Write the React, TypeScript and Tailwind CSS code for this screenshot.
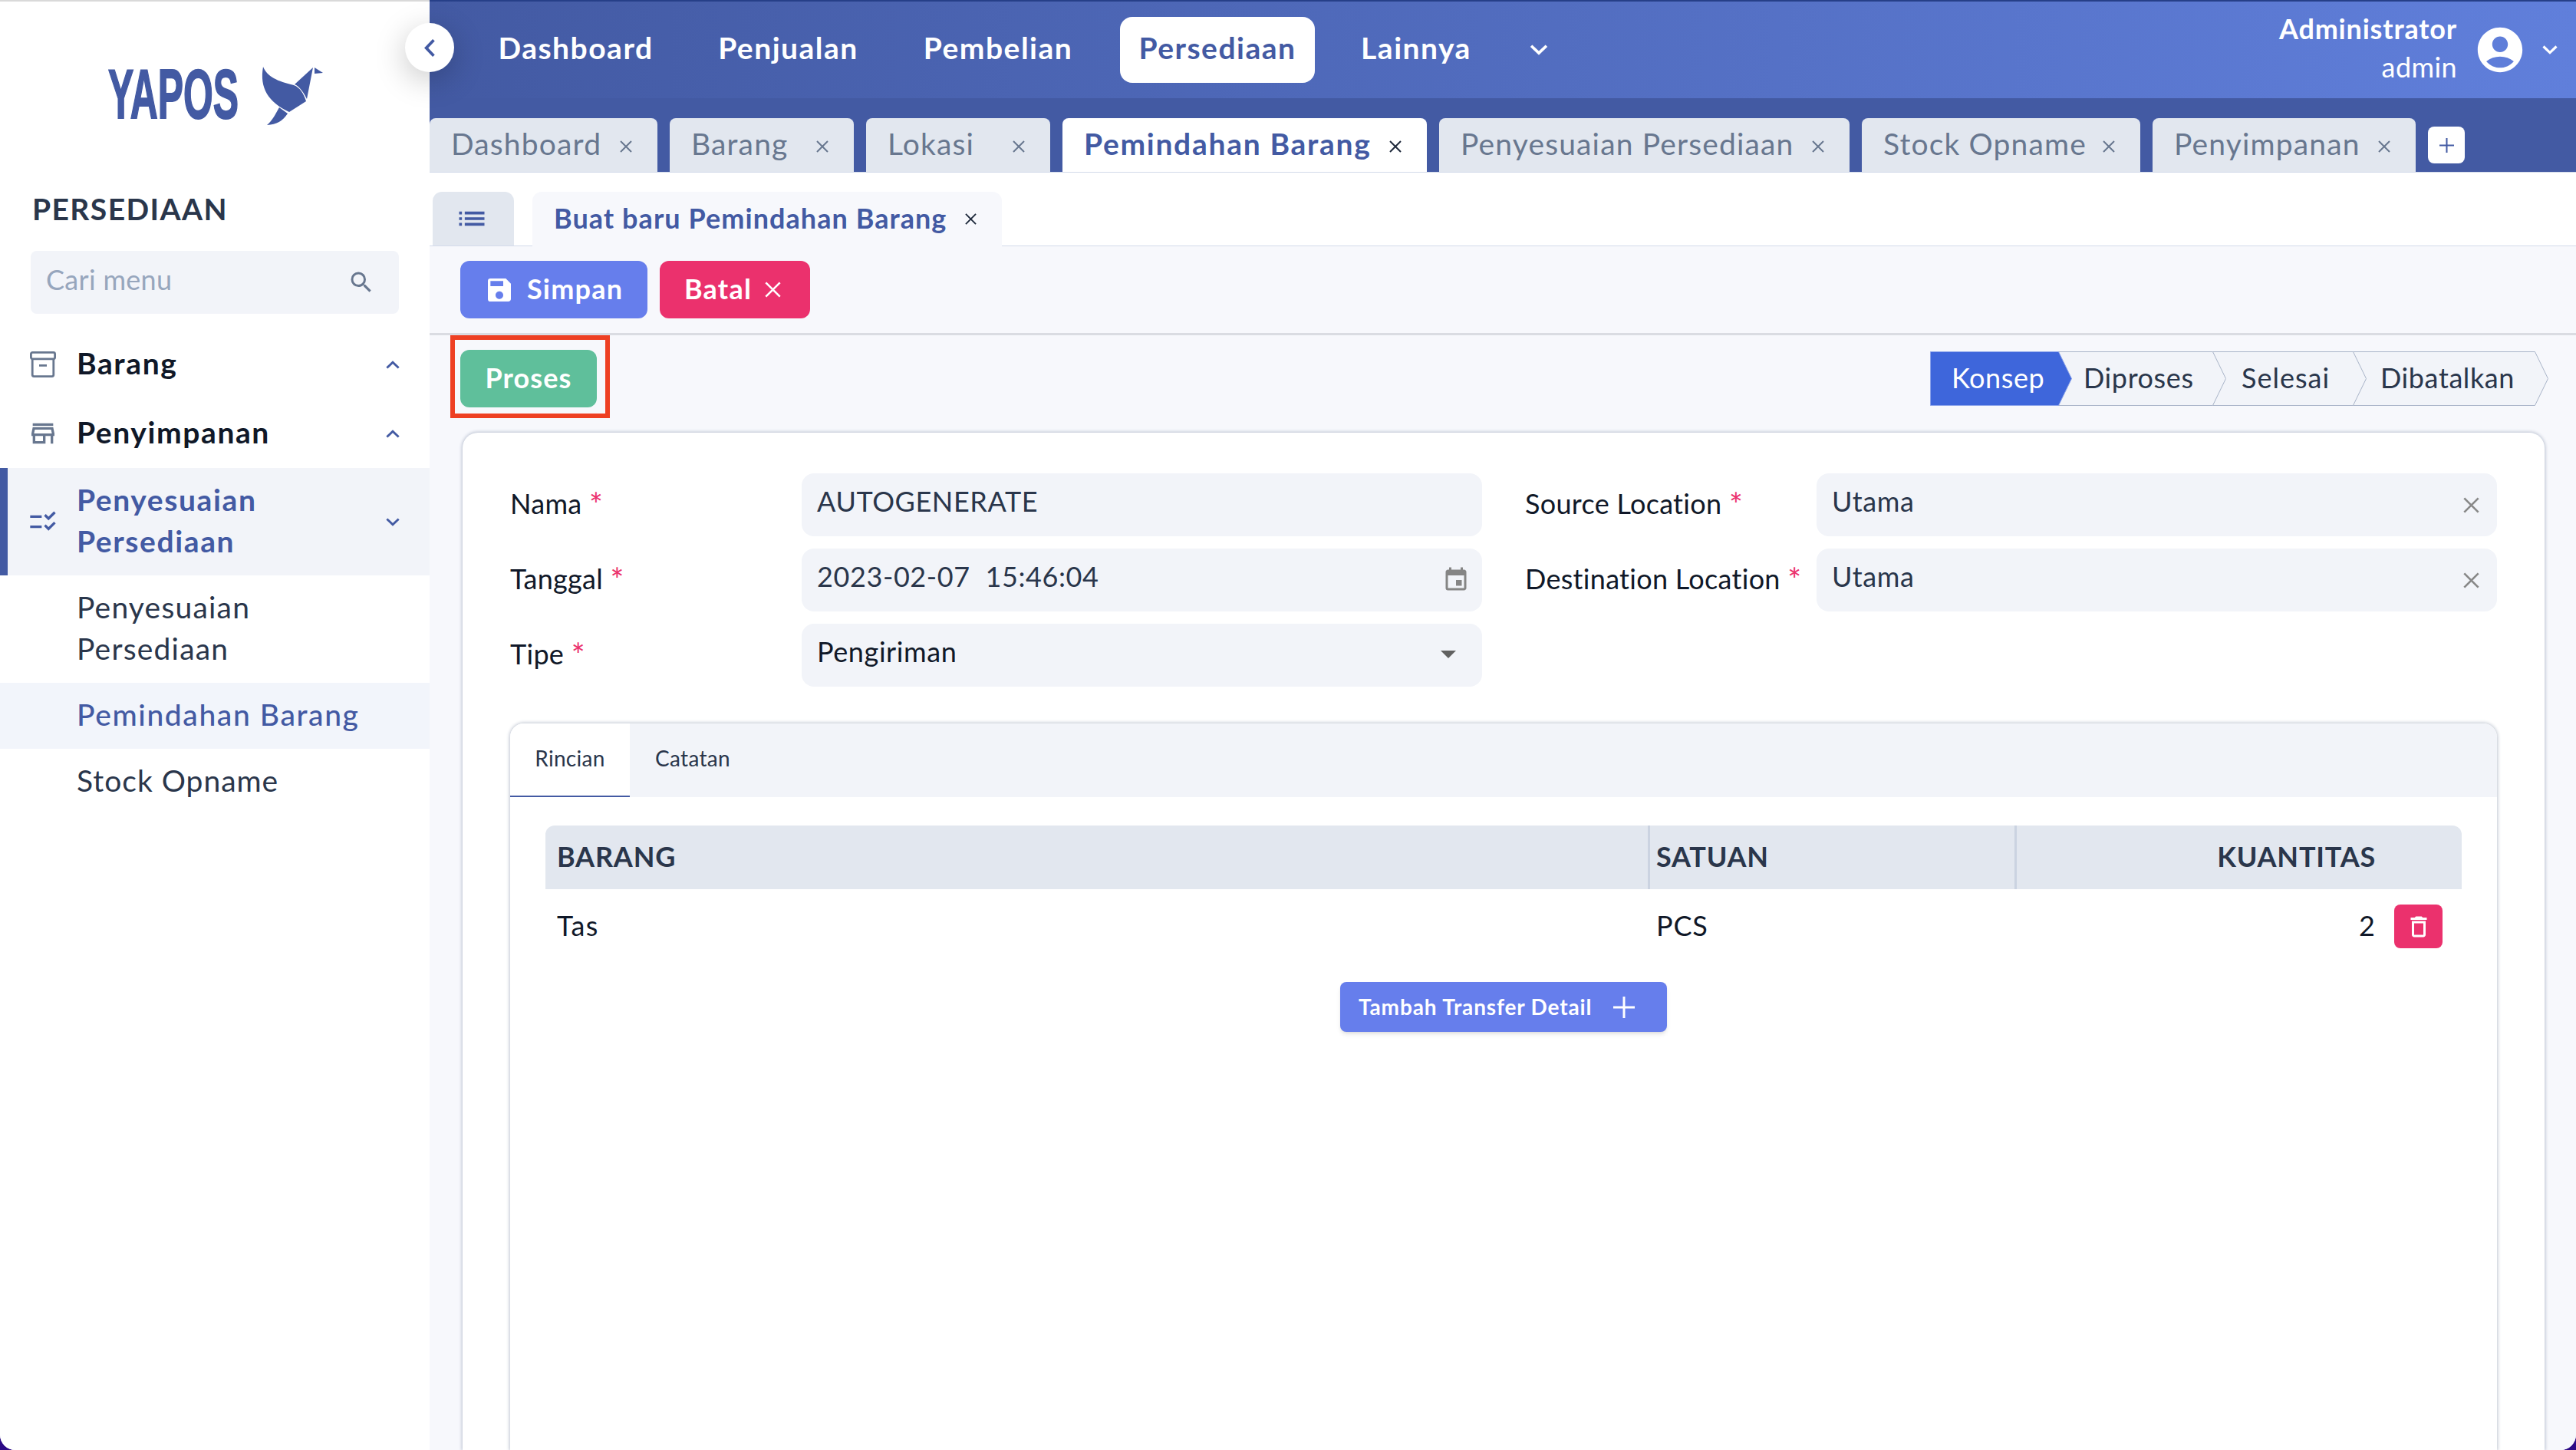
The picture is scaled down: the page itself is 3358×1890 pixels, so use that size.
import type { ReactNode } from 'react';
import clsx from 'clsx';
import {
  MdAccountCircle,
  MdArrowDropDown,
  MdChecklistRtl,
  MdDeleteOutline,
  MdEvent,
  MdList,
  MdOutlineStore,
  MdSave,
  MdSearch,
} from 'react-icons/md';

const Cross = ({ className }: { className?: string }) => (
  <svg viewBox="0 0 16 16" fill="none" stroke="currentColor" strokeWidth="2" className={className}>
    <path d="M1 1L15 15M15 1L1 15" />
  </svg>
);

const Plus = ({ className }: { className?: string }) => (
  <svg viewBox="0 0 16 16" fill="none" stroke="currentColor" strokeWidth="1.7" className={className}>
    <path d="M8 0V16M0 8H16" />
  </svg>
);

const Chevron = ({ className }: { className?: string }) => (
  <svg viewBox="0 0 20 12" fill="none" stroke="currentColor" strokeWidth="3.2" className={className}>
    <path d="M1.5 1.5L10 9.6L18.5 1.5" />
  </svg>
);

const ArchiveIcon = () => (
  <svg viewBox="0 0 34 34" fill="none" stroke="currentColor" strokeWidth="2.8" className="w-[34px] h-[34px]">
    <rect x="1.4" y="1.4" width="31.2" height="8.4" rx="2" />
    <path d="M3.2 9.8V30.6a2 2 0 0 0 2 2H28.8a2 2 0 0 0 2-2V9.8M12 18.4H22" />
  </svg>
);

const Logo = () => (
  <svg viewBox="-20 -30 320 160" fill="#435aa3" className="w-[320px] h-[160px] overflow-visible">
    <text
      x="3"
      y="84"
      fontFamily="'Liberation Sans Narrow', 'Liberation Sans', sans-serif"
      fontWeight="700"
      fontSize="90"
      textLength="170"
      lengthAdjust="spacingAndGlyphs"
      stroke="#435aa3"
      strokeWidth="2"
    >
      YAPOS
    </text>
    <path d="M205 17C200 45 212 63 239 76L261 62C258 52 253 44 245 41C224 36 210 30 205 17Z" />
    <path d="M246 40L270 18L262 59C258 51 253 43 246 40Z" />
    <path d="M272 18L283 25L272 26Z" />
    <path d="M226 70L237 78C230 88 223 92 210 93C217 87 221 79 226 70Z" />
  </svg>
);

type MenuItemProps = { label: string; icon: ReactNode; active?: boolean };

const MenuItem = ({ label, icon, active }: MenuItemProps) => (
  <div
    className={clsx(
      'flex items-center border-l-[10px] pl-[29px] pr-[39px] leading-[54px] font-bold',
      active ? 'h-[140px] border-[#435aa3] bg-[#f2f4f9] text-[#435aa3]' : 'h-[90px] border-transparent text-[#101828]'
    )}
  >
    <span className={clsx('w-[34px] mr-[27px] flex justify-center', active ? 'text-[#435aa3]' : 'text-[#68778f]')}>{icon}</span>
    <span className="flex-1 pr-20 pb-1 tracking-[1.6px]">{label}</span>
    <Chevron className={clsx('w-[18px] h-[11px] text-[#435aa3]', !active && 'rotate-180')} />
  </div>
);

const subMenu = [
  { label: 'Penyesuaian Persediaan', className: 'h-[140px] pr-40 tracking-[1.2px] text-[#2a364b]' },
  { label: 'Pemindahan Barang', className: 'h-[86px] bg-[#f2f5fb] text-[#435aa3] font-medium tracking-[1.6px]' },
  { label: 'Stock Opname', className: 'h-[86px] tracking-[1px] text-[#2a364b]' },
];

const Sidebar = () => (
  <aside className="w-[560px] shrink-0 h-full bg-white border-t-2 border-[#d9d9d9] text-[39px]">
    <div className="h-[238px] pt-[38px] pl-[118px]">
      <Logo />
    </div>
    <div className="h-[87px] pl-[42px] leading-[65px] font-bold tracking-[1.4px] text-[#2a364b]">PERSEDIAAN</div>
    <div className="mx-10 h-[82px] rounded-lg bg-[#f2f4f9] pl-[20px] pr-[31px] flex items-center justify-between text-[36px] text-[#97a6bd]">
      <span className="pb-2 tracking-[0.3px]">Cari menu</span>
      <MdSearch className="w-9 h-9 text-[#68778f]" />
    </div>
    <nav className="pt-[21px]">
      <MenuItem label="Barang" icon={<ArchiveIcon />} />
      <MenuItem label="Penyimpanan" icon={<MdOutlineStore className="w-10 h-10 shrink-0" />} />
      <MenuItem label="Penyesuaian Persediaan" icon={<MdChecklistRtl className="w-10 h-10 shrink-0" />} active />
      {subMenu.map((item) => (
        <div key={item.label} className={clsx('flex items-center pl-[100px] pb-1 leading-[54px]', item.className)}>
          {item.label}
        </div>
      ))}
    </nav>
  </aside>
);

const navItems = [
  { label: 'Dashboard', className: 'ml-[64px] w-[253px] text-white' },
  { label: 'Penjualan', className: 'ml-[34px] w-[233px] text-white' },
  { label: 'Pembelian', className: 'ml-[34px] w-[246px] text-white' },
  { label: 'Persediaan', className: 'ml-[36px] w-[254px] bg-white text-[#435aa3]' },
  { label: 'Lainnya', className: 'ml-[34px] w-[196px] text-white' },
];

const Header = () => (
  <header className="h-32 shrink-0 border-t-2 border-[#263f88] bg-linear-to-r from-[#435aa3] to-[#607fdb] flex items-center text-white">
    {navItems.map((item) => (
      <div key={item.label} className={clsx('h-[86px] rounded-2xl flex items-center justify-center pb-1.5 text-[39px] font-bold tracking-[1.5px]', item.className)}>
        {item.label}
      </div>
    ))}
    <Chevron className="ml-[50px] w-6 h-[14px]" />
    <div className="ml-auto text-right text-[36px] leading-[50px] pb-1.5">
      <div className="font-bold tracking-[0.8px]">Administrator</div>
      <div className="tracking-[0.4px]">admin</div>
    </div>
    <MdAccountCircle className="ml-[21px] w-[70px] h-[70px]" />
    <Chevron className="ml-5 mr-6 w-5 h-3" />
  </header>
);

const tabs = [
  { label: 'Dashboard', className: 'w-[297px]' },
  { label: 'Barang', className: 'w-[240px]' },
  { label: 'Lokasi', className: 'w-[240px]' },
  { label: 'Pemindahan Barang', className: 'w-[475px]', active: true },
  { label: 'Penyesuaian Persediaan', className: 'w-[535px]' },
  { label: 'Stock Opname', className: 'w-[363px]' },
  { label: 'Penyimpanan', className: 'w-[343px]' },
];

const TabBar = () => (
  <div className="h-[97px] shrink-0 bg-[#435aa3] border-b border-[#d3daea] pt-[26px] flex gap-4">
    {tabs.map((tab) => (
      <div
        key={tab.label}
        className={clsx(
          'h-[70px] rounded-t-lg pl-[28px] pr-[33px] flex items-center justify-between text-[39px] whitespace-nowrap',
          tab.className,
          tab.active ? 'bg-white text-[#435aa3] font-bold tracking-[1.7px]' : 'bg-[#e2e7ef] text-[#68778f] tracking-[1.15px]'
        )}
      >
        <span className="pb-1">{tab.label}</span>
        <Cross className={clsx('w-4 h-4 mt-1 shrink-0', tab.active && 'text-[#1e293b]')} />
      </div>
    ))}
    <div className="mt-[11px] w-12 h-12 rounded-lg bg-white text-[#435aa3] flex items-center justify-center">
      <Plus className="w-[19px] h-[19px]" />
    </div>
  </div>
);

const SubTabs = () => (
  <div className="h-24 shrink-0 bg-white border-b border-[#d3daea] pt-[25px] pl-1 flex gap-6">
    <div className="w-[106px] h-[70px] rounded-t-xl bg-[#e2e7ef] text-[#435aa3] flex items-center justify-center pr-1">
      <MdList className="w-11 h-11" />
    </div>
    <div className="w-[612px] h-[71px] rounded-t-xl bg-[#f7f8fc] pl-[28px] pr-[33px] flex items-center justify-between text-[36px] font-bold text-[#435aa3]">
      <span className="pb-1 tracking-[1.05px] whitespace-nowrap">Buat baru Pemindahan Barang</span>
      <Cross className="w-[15px] h-[15px] shrink-0 text-[#1e293b]" />
    </div>
  </div>
);

// start/body are the left and right edges of a step, its tip sticks out past body
const steps = [
  { label: 'Konsep', start: 0, body: 167 },
  { label: 'Diproses', start: 167, body: 368 },
  { label: 'Selesai', start: 368, body: 551 },
  { label: 'Dibatalkan', start: 551, body: 788 },
];

const StatusSteps = () => (
  <div className="relative w-[806px] h-[71px]">
    <svg viewBox="0 0 806 71" className="absolute inset-0 w-full h-full" fill="#f2f4f9" stroke="#a9b4c8" strokeWidth="1">
      {[...steps].reverse().map((step) => (
        <path
          key={step.label}
          d={`M${step.start + 0.5} 0.5H${step.body + 0.5}L${step.body + 17.5} 35.5L${step.body + 0.5} 70.5H${step.start + 0.5}Z`}
          fill={step.start === 0 ? '#3e66db' : undefined}
          stroke={step.start === 0 ? '#8ba3ea' : undefined}
        />
      ))}
    </svg>
    <div className="relative h-full flex items-center text-[36px] pb-1 tracking-[0.6px] text-[#2a364b]">
      <span className="pl-[28px] w-[200px] text-white">Konsep</span>
      <span className="w-[206px]">Diproses</span>
      <span className="w-[181px] tracking-[1px]">Selesai</span>
      <span>Dibatalkan</span>
    </div>
  </div>
);

const Field = ({ label, value, icon, dark }: { label: string; value: string; icon?: ReactNode; dark?: boolean }) => (
  <div className="flex items-center h-[82px] text-[36px]">
    <div className="w-[380px] pb-1 whitespace-nowrap tracking-[0.3px] text-[#101828]">
      {label} <span className="inline-block translate-y-[3px] text-[#eb316d] text-[42px] leading-none">*</span>
    </div>
    <div className={clsx('flex-1 h-full rounded-2xl bg-[#f2f4f9] pl-5 flex items-center justify-between', dark ? 'text-[#101828]' : 'text-[#2a364b]')}>
      <span className="pb-2.5 whitespace-pre tracking-[0.6px]">{value}</span>
      {icon}
    </div>
  </div>
);

const DetailTable = () => (
  <div className="mx-[46px] mt-[37px] text-[36px]">
    <div className="h-[83px] rounded-t-xl bg-[#e2e7ef] flex text-[#2a364b] font-bold leading-[80px] tracking-[0.8px]">
      <div className="w-[1437px] pl-[15px]">BARANG</div>
      <div className="w-[478px] border-l-[3px] border-[#cbd3e1] pl-2">SATUAN</div>
      <div className="flex-1 border-l-[3px] border-[#cbd3e1] pr-[112px] text-right">KUANTITAS</div>
    </div>
    <div className="h-[97px] flex items-center text-[#101828]">
      <div className="w-[1448px] pl-[15px] pb-1 tracking-[1.4px]">Tas</div>
      <div className="w-[478px] pb-1 tracking-[0.8px]">PCS</div>
      <div className="flex-1 text-right pr-[25px] pb-1">2</div>
      <div className="mr-[25px] w-[63px] h-[57px] rounded-lg bg-[#eb316d] text-white flex items-center justify-center">
        <MdDeleteOutline className="w-9 h-9" />
      </div>
    </div>
    <div className="flex justify-center pt-6">
      <div className="w-[426px] h-[65px] rounded-lg bg-[#667eec] shadow-md text-white text-[28px] font-bold flex items-center pl-6 pr-[42px] justify-between">
        <span className="pb-0.5 tracking-[0.85px] whitespace-nowrap">Tambah Transfer Detail</span>
        <Plus className="w-7 h-7 shrink-0" />
      </div>
    </div>
  </div>
);

export default function App() {
  return (
    <div className="w-[3358px] h-[1890px] bg-[#2c0a86] overflow-hidden font-['Lato',sans-serif]">
      <div className="relative flex w-full h-full bg-white rounded-b-[20px] overflow-hidden">
        <Sidebar />
        <main className="flex-1 min-w-0 flex flex-col bg-[#f7f8fc]">
          <Header />
          <TabBar />
          <SubTabs />
          <div className="h-[116px] shrink-0 border-b-[3px] border-[#dadce2] pt-[19px] pl-10 flex gap-4 text-white text-[36px] font-bold tracking-[1.2px]">
            <div className="w-[244px] h-[75px] rounded-xl bg-[#667eec] flex items-center pl-[31px]">
              <MdSave className="w-10 h-10 mr-4" />
              <span className="pb-1">Simpan</span>
            </div>
            <div className="w-[196px] h-[75px] rounded-xl bg-[#eb316d] flex items-center justify-between pl-[32px] pr-[38px]">
              <span className="pb-1">Batal</span>
              <Cross className="w-[21px] h-[21px]" />
            </div>
          </div>
          <div className="h-[127px] shrink-0 flex justify-between pl-[27px] pr-9">
            <div className="w-[208px] h-[108px] border-[6px] border-[#ee4023] pl-[7px] pt-[13px]">
              <div className="w-[178px] h-[75px] rounded-xl bg-[#5fbf9b] text-white text-[36px] font-bold tracking-[1.1px] flex items-center justify-center pb-1">
                Proses
              </div>
            </div>
            <div className="pt-[21px]">
              <StatusSteps />
            </div>
          </div>
          <div className="flex-1 ml-[43px] mr-[41px] rounded-t-[20px] bg-white shadow-[0_0_4px_1px_#b9c0d0] px-[62px] pt-[53px] flex flex-col">
            <div className="grid grid-cols-[1267px_1fr] gap-x-[56px] gap-y-4">
              <Field label="Nama" value="AUTOGENERATE" />
              <Field label="Source Location" value="Utama" icon={<Cross className="w-[21px] h-[21px] mr-[23px] text-[#888]" />} />
              <Field label="Tanggal" value="2023-02-07  15:46:04" icon={<MdEvent className="w-9 h-9 mr-4 text-[#858585]" />} />
              <Field label="Destination Location" value="Utama" icon={<Cross className="w-[21px] h-[21px] mr-[23px] text-[#888]" />} />
              <Field label="Tipe" value="Pengiriman" dark icon={<MdArrowDropDown className="w-12 h-12 mr-5 mb-1 text-[#616161]" />} />
            </div>
            <div className="mt-[48px] flex-1 rounded-t-[18px] shadow-[0_0_4px_1px_#bfc5d1] bg-white">
              <div className="h-24 bg-[#f2f4f9] rounded-t-[18px] flex text-[28px] tracking-[0.3px] text-[#2a364b]">
                <div className="w-[156px] h-full rounded-tl-[18px] bg-white border-b-2 border-[#435aa3] flex items-center justify-center pb-1">Rincian</div>
                <div className="w-[164px] h-full flex items-center justify-center pb-1.5">Catatan</div>
              </div>
              <DetailTable />
            </div>
          </div>
        </main>
        {/* sidebar toggle sits on the edge between the two columns */}
        <div className="absolute left-[528px] top-[30px] w-16 h-16 rounded-full bg-white text-[#435aa3] flex items-center justify-center shadow-[0_10px_40px_rgba(0,0,0,0.22)]">
          <Chevron className="w-[24px] h-[15px] rotate-90" />
        </div>
      </div>
    </div>
  );
}
